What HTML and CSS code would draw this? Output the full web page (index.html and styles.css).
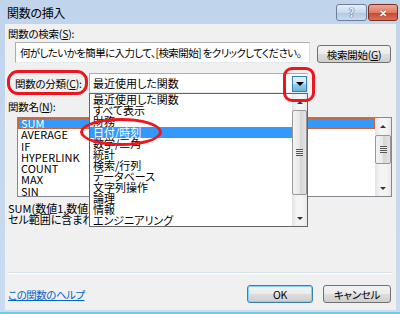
FILE: index.html
```html
<!DOCTYPE html>
<html>
<head>
  <meta charset="UTF-8">
  <title>関数の挿入</title>
  <link rel="stylesheet" href="styles.css">
</head>
<body>
  <div class="window">
    <div class="titlebar">
      <span class="title">関数の挿入</span>
      <div class="caption">
        <span class="cap-btn help">?</span>
        <span class="cap-btn close">✕</span>
      </div>
    </div>
    <div class="client">
      <div class="label">関数の検索(<u>S</u>):</div>
      <div class="search-row">
        <div class="search-box">何がしたいかを簡単に入力して、[検索開始] をクリックしてください。</div>
        <span class="button search-btn">検索開始(<u>G</u>)</span>
      </div>
      <div class="category-row">
        <span class="label cat-label">関数の分類(<u>C</u>):</span>
        <div class="combo">
          <span class="combo-text">最近使用した関数</span>
          <span class="combo-arrow"><span class="tri-down"></span></span>
        </div>
      </div>
      <div class="label name-label">関数名(<u>N</u>):</div>
      <div class="listbox">
        <div class="items">
          <div class="item selected">SUM</div>
          <div class="item">AVERAGE</div>
          <div class="item">IF</div>
          <div class="item">HYPERLINK</div>
          <div class="item">COUNT</div>
          <div class="item">MAX</div>
          <div class="item">SIN</div>
        </div>
        <div class="scrollbar">
          <span class="sb-arrow"><span class="tri-up small"></span></span>
          <div class="sb-track track-list"><span class="thumb"><span class="grip"></span></span></div>
          <span class="sb-arrow"><span class="tri-down small"></span></span>
        </div>
      </div>
      <div class="desc">
        <div>SUM(数値1,数値2,...)</div>
        <div>セル範囲に含まれる数値をすべて合計します。</div>
      </div>
      <div class="separator"></div>
      <div class="footer">
        <a href="#" class="help-link">この関数のヘルプ</a>
        <div class="footer-buttons">
          <span class="button ok">OK</span>
          <span class="button cancel">キャンセル</span>
        </div>
      </div>

      <div class="dropdown">
        <div class="items">
          <div class="item">最近使用した関数</div>
          <div class="item">すべて表示</div>
          <div class="item">財務</div>
          <div class="item selected">日付/時刻</div>
          <div class="item">数学/三角</div>
          <div class="item">統計</div>
          <div class="item">検索/行列</div>
          <div class="item">データベース</div>
          <div class="item">文字列操作</div>
          <div class="item">論理</div>
          <div class="item">情報</div>
          <div class="item">エンジニアリング</div>
        </div>
        <div class="scrollbar">
          <span class="sb-arrow"><span class="tri-up small"></span></span>
          <div class="sb-track track-drop"><span class="thumb"><span class="grip"></span></span></div>
          <span class="sb-arrow"><span class="tri-down small"></span></span>
        </div>
      </div>

      <div class="mark mark-label"></div>
      <div class="mark mark-arrow"></div>
      <div class="mark mark-item"></div>
    </div>
  </div>
</body>
</html>
```

FILE: styles.css
```css
body { margin: 0; font-family: "Noto Sans CJK JP", "Noto Sans", sans-serif; font-size: 10.5px; line-height: 11px; letter-spacing: -0.25px; color: #000; font-feature-settings: "palt"; }
u { text-decoration: underline; text-underline-offset: 1px; }

.window { width: 400px; height: 314px; background: linear-gradient(#c0d4ec, #cadcf0); display: flex; flex-direction: column; overflow: hidden; box-sizing: border-box; border-bottom: 2px solid #6ccbe8; }
.titlebar { height: 24px; flex: none; display: flex; align-items: flex-start; justify-content: space-between; }
.title { font-size: 12px; line-height: 12px; letter-spacing: -0.3px; margin: 7px 0 0 7px; }
.caption { display: flex; margin: 4px 2px 0 0; gap: 1px; }
.cap-btn { height: 15px; border: 1px solid #6d7f98; border-radius: 3px; display: flex; align-items: center; justify-content: center; font-size: 11px; font-weight: bold; color: #fff; letter-spacing: 0; }
.help { width: 29px; background: linear-gradient(#e6eef8 0, #c9d9ee 50%, #afc6e4 51%, #c8dbf2 100%); color: #f4f8fc; text-shadow: 0 0 1px #2d3f5a, 0 0 1px #2d3f5a; }
.close { width: 28px; background: linear-gradient(#eea796 0, #de7a62 50%, #c9442c 51%, #da7258 100%); border-color: #7a2e22; text-shadow: 0 0 1px #5a1a10; font-size: 10px; }

.client { position: relative; height: 286px; margin: 0 4px 0 5px; background: #f0f0f0; padding: 4px 5px 0 3px; box-sizing: border-box; }

.label { height: 11px; white-space: nowrap; }
.search-row { display: flex; align-items: flex-end; margin-top: 3px; }
.search-box { width: 295px; height: 21px; box-sizing: border-box; margin-left: 7px; background: #fff; border: 1px solid #abadb3; border-right-color: #dbdfe6; border-bottom-color: #e3e9ef; padding: 4px 0 0 4px; white-space: nowrap; overflow: hidden; letter-spacing: -0.6px; }
.button { display: flex; align-items: center; justify-content: center; box-sizing: border-box; border: 1px solid #707070; border-radius: 3px; background: linear-gradient(#f2f2f2 0, #ebebeb 50%, #dddddd 51%, #cfcfcf 100%); white-space: nowrap; }
.search-btn { width: 74px; height: 18px; margin-left: 7px; }

.category-row { display: flex; align-items: center; height: 20px; margin-top: 10px; }
.cat-label { margin-left: 7px; width: 74px; }
.combo { width: 219px; height: 20px; box-sizing: border-box; border: 1px solid #abadb3; border-right-color: #dbdfe6; border-bottom-color: #e3e9ef; background: #fff; display: flex; align-items: center; justify-content: space-between; padding: 0 0 0 3px; }
.combo-text { font-size: 11px; letter-spacing: 0; }
.combo-arrow { width: 15px; height: 16px; box-sizing: border-box; margin-top: 1px; border: 1px solid #3c7fb1; background: linear-gradient(#e5f4fc 0, #c4e5f6 50%, #98d1ef 51%, #68b3db 100%); display: flex; align-items: center; justify-content: center; }

.tri-down { width: 0; height: 0; border-left: 4px solid transparent; border-right: 4px solid transparent; border-top: 4px solid #000; }
.tri-up { width: 0; height: 0; border-left: 4px solid transparent; border-right: 4px solid transparent; border-bottom: 4px solid #000; }
.tri-down.small { border-width: 3px 3px 0; border-top-color: #333; }
.tri-up.small { border-width: 0 3px 3px; border-bottom-color: #333; }

.name-label { margin-top: 8px; }
.listbox { width: 375px; height: 80px; box-sizing: border-box; margin: 5px 0 0 9px; border: 1px solid #828790; background: #fff; display: flex; }
.items { flex: 1; }
.item { height: 11.3px; line-height: 11px; padding-left: 3px; white-space: nowrap; font-size: 11px; letter-spacing: 0; }
.item.selected { background: #3399ff; color: #fff; }
.listbox .item.selected { outline: 1px dotted #c06030; outline-offset: -1px; }

.scrollbar { width: 16px; display: flex; flex-direction: column; background: linear-gradient(90deg, #e3e3e3, #f4f4f4 30%, #f4f4f4 70%, #e8e8e8); }
.sb-arrow { height: 16px; display: flex; align-items: center; justify-content: center; flex: none; }
.sb-track { flex: 1; display: flex; flex-direction: column; }
.thumb { display: flex; align-items: center; justify-content: center; box-sizing: border-box; border: 1px solid #979797; border-radius: 2px; background: linear-gradient(90deg, #f3f3f3, #e8e8e8 50%, #d5d5d5 51%, #e3e3e3); }
.track-list .thumb { height: 29px; margin-top: 1px; }
.track-drop .thumb { height: 85px; }
.grip { width: 7px; height: 7px; background: repeating-linear-gradient(#555 0 1px, #ededed 1px 2px); }

.desc { margin-top: 6px; white-space: nowrap; font-size: 11px; letter-spacing: 0; }
.separator { width: 384px; height: 0; border-top: 1px solid #d5dfe5; border-bottom: 1px solid #fff; margin-top: 47px; }
.footer { display: flex; justify-content: space-between; align-items: center; margin-top: 11px; }
.help-link { color: #0066cc; text-decoration: underline; letter-spacing: -0.5px; }
.footer-buttons { display: flex; gap: 10px; }
.ok { width: 66px; height: 18px; border-color: #3c7fb1; box-shadow: inset 0 0 0 1px #7fd2f7; }
.cancel { width: 68px; height: 18px; }

.dropdown { position: absolute; left: 84px; top: 69px; width: 219px; height: 134px; box-sizing: border-box; border: 1px solid #646464; background: #fff; display: flex; }
.dropdown .item { height: 11px; padding-left: 3px; }
.dropdown .scrollbar { width: 15px; }

.mark { position: absolute; border: 3px solid #f0141e; box-sizing: border-box; }
.mark-label { left: 2px; top: 46px; width: 81px; height: 25px; border-radius: 11px; }
.mark-arrow { left: 278px; top: 43px; width: 32px; height: 35px; border-radius: 9px; }
.mark-item { left: 75px; top: 94px; width: 82px; height: 28px; border-radius: 50%; }
```
